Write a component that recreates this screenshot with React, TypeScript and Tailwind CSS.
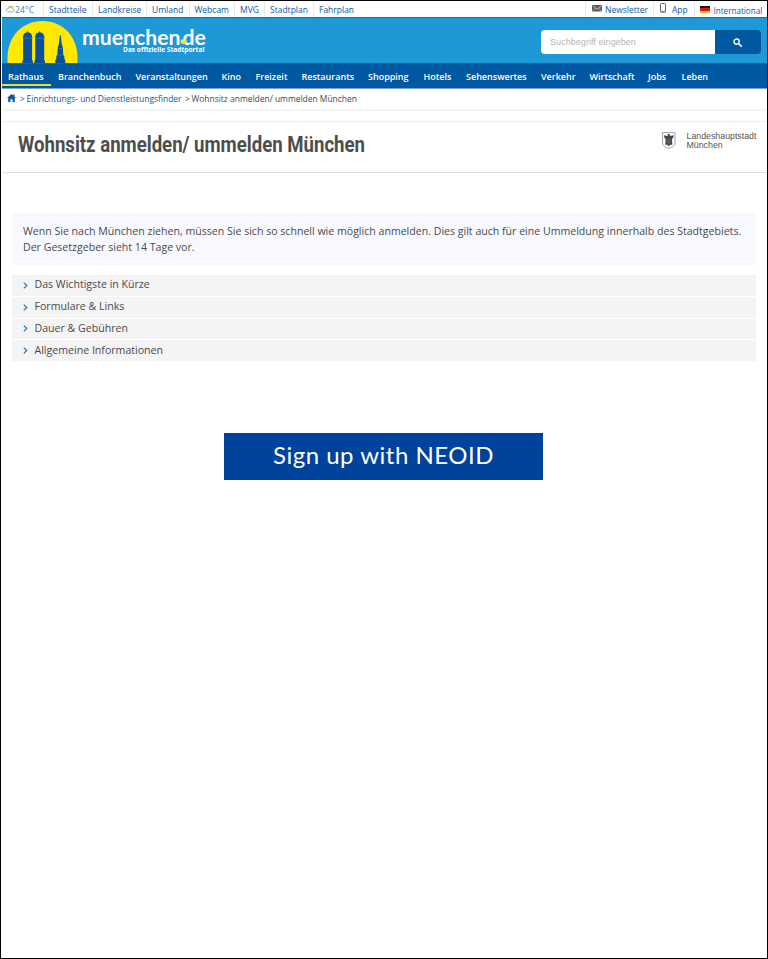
import React from "react";

const topLinks = [
  { label: "Stadtteile", box: "w-[49px]" },
  { label: "Landkreise", box: "w-[54px]" },
  { label: "Umland", box: "w-[42.5px]" },
  { label: "Webcam", box: "w-[45.5px]" },
  { label: "MVG", box: "w-[30px]" },
  { label: "Stadtplan", box: "w-[49px]" },
  { label: "Fahrplan", box: "w-[50px]" },
];

const navLinks = [
  { label: "Rathaus", box: "w-[50px]" },
  { label: "Branchenbuch", box: "w-[77.5px]" },
  { label: "Veranstaltungen", box: "w-[86px]" },
  { label: "Kino", box: "w-[34px]" },
  { label: "Freizeit", box: "w-[46px]" },
  { label: "Restaurants", box: "w-[66.5px]" },
  { label: "Shopping", box: "w-[55.5px]" },
  { label: "Hotels", box: "w-[42.5px]" },
  { label: "Sehenswertes", box: "w-[75px]" },
  { label: "Verkehr", box: "w-[48.5px]" },
  { label: "Wirtschaft", box: "w-[58.5px]" },
  { label: "Jobs", box: "w-[33.5px]" },
  { label: "Leben", box: "w-[40px]" },
];

const sections = [
  "Das Wichtigste in Kürze",
  "Formulare & Links",
  "Dauer & Gebühren",
  "Allgemeine Informationen",
];

function WeatherIcon() {
  return (
    <svg width="10" height="8" viewBox="0 0 10 8" fill="none">
      <path d="M3 2.6C4 .6 7.300 .5 8.200 3" stroke="#f0b840" strokeWidth="1.100" />
      <path d="M2.400 6.800h5a1.500 1.500 0 0 0 .2-3A2.300 2.300 0 0 0 3.500 3.400 1.800 1.800 0 0 0 2.400 6.800Z" fill="#fff" stroke="#5fa3b4" strokeWidth=".8" />
    </svg>
  );
}

function Skyline() {
  return (
    <svg className="shrink-0" width="72" height="45" viewBox="0 0 72 45">
      <path d="M.5 45V40C.5 18 15.500 3 35.500 3s35 15 35 37v5Z" fill="#ffe900" />
      <g fill="#0a509c">
        <path d="M15.300 45v-2l.8-1V20l-.3-1 .5-1c.2-2.600 1.900-3.300 3.700-3.700l.6-1.600.6 1.600c1.800.4 3.500 1.100 3.700 3.700l.5 1-.3 1v22l.8 1v2Z" />
        <path d="M27.400 45v-2l.8-1V20l-.3-1 .5-1c.2-2.600 1.900-3.300 3.700-3.700l.6-1.600.6 1.600c1.800.4 3.500 1.100 3.700 3.700l.5 1-.3 1v22l.8 1v2Z" />
        <path d="M48.300 45v-3l1-1v-3l1-1 .4-7 1.300-5 .5-5 .2-1-.3-.6.9-1.300.9 1.300-.3.600.2 1 .5 5 1.300 5 .4 7 1 1v3l1 1v3Z" />
      </g>
      <path d="M16.500 20.200h8.800M28.600 20.200h8.800M51.800 30.500h3.300M51 37h4.800" stroke="#438bab" strokeWidth=".6" />
    </svg>
  );
}

function Crest() {
  return (
    <svg className="shrink-0" width="14" height="17" viewBox="0 0 14 17">
      <path d="M.6.6h12.400v10.500c0 2.300-2.700 4.400-6.200 5.200C3.300 15.500.6 13.400.6 11.100Z" fill="#fff" stroke="#888" strokeWidth=".8" />
      <path d="M5.700 2h2.200v2l3.600-.8-.3 2.800-1.200.7.3 6H8.200L7.200 14h-.8l-1-1.300H3.300l.3-6L2.400 6l-.3-2.800 3.600.8Z" fill="#444" />
      <path d="M6.800 5.500v7M5.200 7v4M8.400 7v4" stroke="#999" strokeWidth=".4" />
    </svg>
  );
}

export default function App() {
  return (
    <div className="flex h-[959px] w-[768px] flex-col overflow-hidden border border-black bg-white pl-px font-['Open_Sans',sans-serif] text-[#4a4a4a]">
      <div className="flex h-4 shrink-0 items-center justify-between whitespace-nowrap text-[8.500px] leading-[17px] text-[#0b59a2]">
        <div className="flex h-full">
          <div className="flex w-[41px] items-center pl-[3px] text-[#3f7eb0]">
            <WeatherIcon />
            <span className="leading-[17px] tracking-[0.150px]">24°C</span>
          </div>
          {topLinks.map((l) => (
            <a key={l.label} className={`${l.box} border-l border-[#e9e9e9] pl-[5px]`}>
              {l.label}
            </a>
          ))}
        </div>
        <div className="flex h-full">
          <a className="flex w-[68px] border-l border-[#e9e9e9] pl-[6px]">
            <svg className="mt-1 mr-[3px]" width="10" height="7" viewBox="0 0 10 7">
              <rect width="10" height="6.500" rx=".8" fill="#5c5c5c" />
              <path d="m.8 1 4.200 3 4.200-3M.8 5.700l2.800-2.600m5.600 2.600L6.400 3.100" stroke="#ddd" strokeWidth=".7" fill="none" />
            </svg>
            Newsletter
          </a>
          <a className="flex w-[40.500px] border-l border-[#e9e9e9] pl-[6px]">
            <svg className="mt-[2px] mr-[6px]" width="6" height="10" viewBox="0 0 6 10">
              <rect x=".5" y=".5" width="5" height="8.800" rx=".8" fill="#fff" stroke="#666" />
              <path d="M1 8.300h4" stroke="#777" strokeWidth=".8" />
            </svg>
            App
          </a>
          <a className="flex w-[73.500px] border-l border-[#e9e9e9] pl-[5px] text-[8.100px]">
            <span className="mt-[5px] mr-1 flex h-[7px] w-[10px] flex-col">
              <i className="h-[2px] bg-[#171310]" />
              <i className="h-[3px] bg-[#d91519]" />
              <i className="h-[2px] bg-[#f5c229]" />
            </span>
            <span className="mt-px">International</span>
          </a>
        </div>
      </div>

      <header className="flex h-[46px] shrink-0 justify-between border-t border-[#0f6eb2] bg-[#1e98d7]">
        <div className="flex pl-[5px]">
          <Skyline />
          <div className="pt-[10px] pl-[3px] text-white">
            <div className="flex h-[17px] w-[125px] font-['Lato',sans-serif] text-[20px] leading-[18px] font-bold">
              <span className="flex origin-left scale-x-[1.060]">
                muenchen
                <i className="z-10 mt-[11px] -mr-[3px] h-[5px] w-[5px] shrink-0 rounded-full bg-[#ffe900]" />
                de
              </span>
            </div>
            <div className="ml-[41px] text-[6.600px] leading-[10px] font-bold whitespace-nowrap">Das offizielle Stadtportal</div>
          </div>
        </div>
        <div className="mt-3 mr-[6px] flex h-6 w-[220px] overflow-hidden rounded">
          <div className="w-[174px] bg-white pl-[9px] font-['Liberation_Sans',sans-serif] text-[9px] leading-[24px] tracking-[0.050px] text-[#b5b5b5]">Suchbegriff eingeben</div>
          <div className="flex flex-1 items-center justify-center bg-[#0058a1] pr-px">
            <svg width="9" height="9" viewBox="0 0 9 9" fill="none" stroke="#fff">
              <circle cx="3.600" cy="3.600" r="2.600" strokeWidth="1.400" />
              <path d="m5.600 5.600 2.600 2.600" strokeWidth="1.600" strokeLinecap="round" />
            </svg>
          </div>
        </div>
      </header>

      <nav className="flex h-[26px] shrink-0 border-t border-b border-t-[#0c69ae] border-b-[#75a5cf] bg-[#0058a1] pl-[6px] text-[9px] leading-[25px] font-semibold whitespace-nowrap text-white">
        {navLinks.map((l, i) => (
          <a key={l.label} className={`${l.box} shrink-0`}>
            {i === 0 ? (
              <span className="-ml-[6px] flex w-[49px] flex-col">
                <span className="h-5 pl-[6px]">{l.label}</span>
                <i className="h-[1.500px] bg-[#e8e03a]" />
              </span>
            ) : (
              l.label
            )}
          </a>
        ))}
      </nav>

      <div className="flex h-[22px] shrink-0 border-b-2 border-[#f3f3f3] pl-[5px] text-[8.450px] leading-[20px] whitespace-nowrap">
        <svg className="mt-[5px] mr-1" width="9" height="8" viewBox="0 0 9 8" fill="#0b59a2">
          <path d="M4.500 0 0 4h1.200v4h2.300V5.300h2V8h2.300V4H9L7.600 2.700V.6H6.300v1Z" />
        </svg>
        <span className="w-[6.500px]">&gt;</span>
        <a className="w-[158.500px] text-[#0b59a2]">Einrichtungs- und Dienstleistungsfinder</a>
        <span className="w-[6.500px]">&gt;</span>
        <span>Wohnsitz anmelden/ ummelden München</span>
      </div>

      <div className="mt-[10px] flex h-[52px] shrink-0 justify-between border-t border-b border-t-[#eee] border-b-[#ddd] pr-[10px] pl-[15.500px]">
        <h1 className="w-[360px] origin-left scale-x-[0.865] font-['Roboto',sans-serif] text-[21.500px] leading-[46px] font-bold whitespace-nowrap text-[#4d4d4d]">
          Wohnsitz anmelden/ ummelden München
        </h1>
        <div className="mt-[10px] flex w-[95px] gap-[10.500px]">
          <Crest />
          <div className="font-['Liberation_Sans',sans-serif] text-[8.800px] leading-[8.500px] text-[#555]">
            Landeshauptstadt
            <br />
            München
          </div>
        </div>
      </div>

      <main className="mt-[40px] mr-[11px] ml-[10px] flex flex-col">
        <p className="h-[52px] bg-[#f8f9ff] pt-[10px] pl-[11px] text-[10.590px] leading-4 whitespace-nowrap">
          Wenn Sie nach München ziehen, müssen Sie sich so schnell wie möglich anmelden. Dies gilt auch für eine Ummeldung innerhalb des Stadtgebiets.
          <br />
          Der Gesetzgeber sieht 14 Tage vor.
        </p>
        <ul className="mt-[10px] flex flex-col gap-px">
          {sections.map((s) => (
            <li key={s} className="flex h-[20.800px] items-center bg-[#f4f4f4] pl-[10.500px] text-[10.600px] leading-[19px]">
              <svg className="mr-[7px]" width="5" height="7" viewBox="0 0 5 7" fill="none">
                <path d="m.8.6 3 2.900-3 2.900" stroke="#2c6da8" strokeWidth="1.100" />
              </svg>
              <span className="-mt-px">{s}</span>
            </li>
          ))}
        </ul>
        <button className="mt-[72px] ml-[212px] h-[47px] w-[319px] bg-[#00439c] pb-[3px] font-['Lato',sans-serif] text-[24px] leading-[44px] tracking-[0.500px] whitespace-nowrap text-white">
          Sign up with NEOID
        </button>
      </main>
    </div>
  );
}
